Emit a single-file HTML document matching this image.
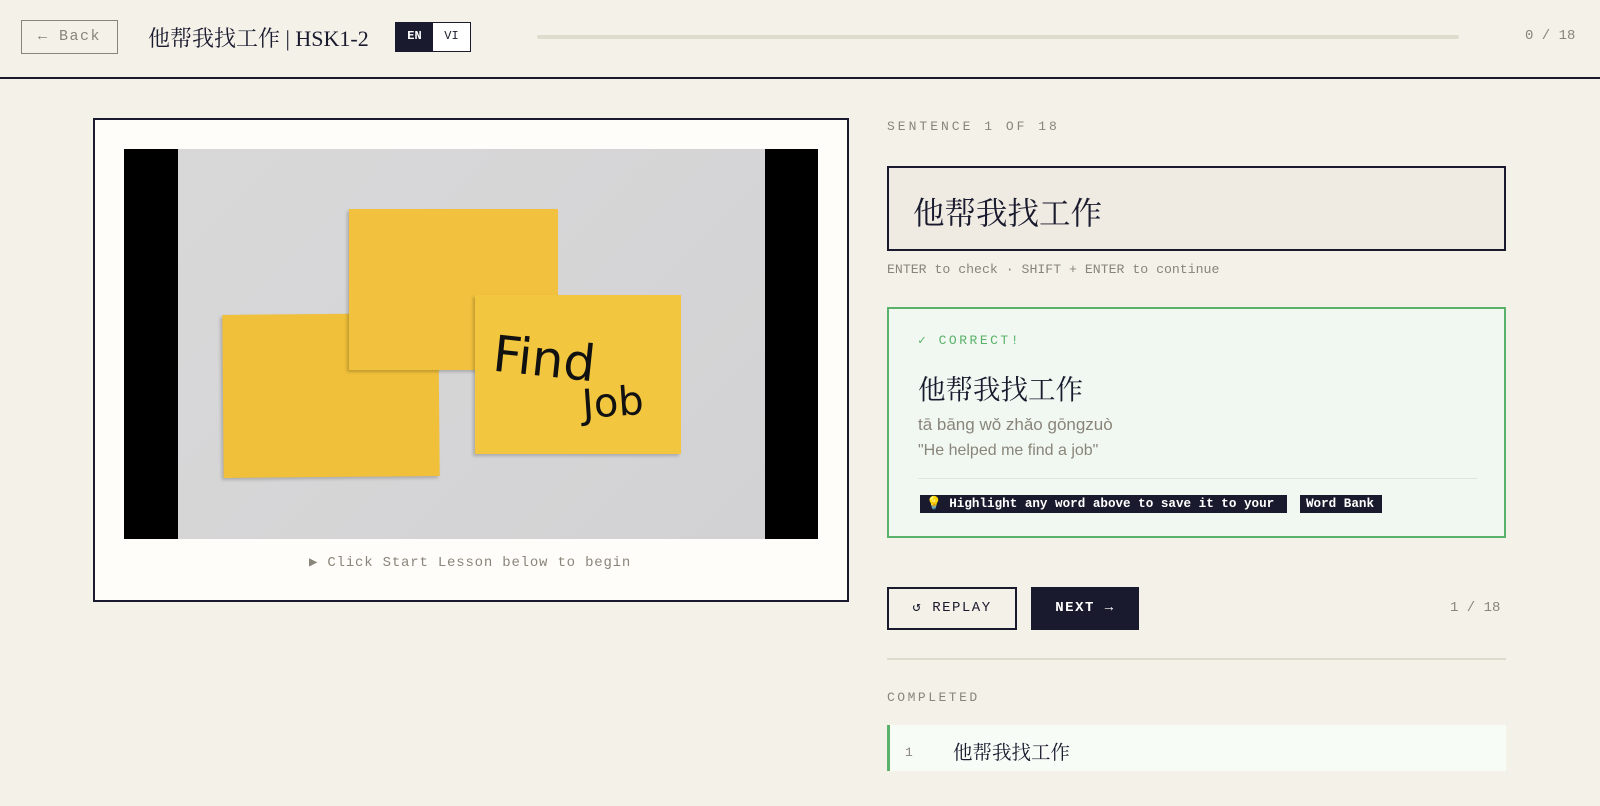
<!DOCTYPE html>
<html><head><meta charset="utf-8"><style>
*{box-sizing:border-box;margin:0;padding:0}
body{width:1600px;height:806px;background:#f4f1e9;font-family:"Liberation Sans","Noto Sans CJK SC",sans-serif;color:#1a1a2e;position:relative;overflow:hidden}
.mono{font-family:"Liberation Mono","DejaVu Sans Mono",monospace}
.serif{font-family:"Liberation Serif","Noto Serif CJK SC",serif}
.a{position:absolute}
</style></head><body>
<div class="a mono" style="left:21px;top:20px;width:97px;height:34px;border:1.5px solid #8a857a;color:#8a857a;font-size:15px;letter-spacing:1.5px;line-height:31px;text-align:center">← Back</div>
<div class="a serif" style="left:148px;top:22px;font-size:22px;color:#1a1a2e">他帮我找工作 | HSK1-2</div>
<div class="a mono" style="left:395px;top:22px;width:76px;height:30px;border:1.5px solid #1a1a2e;display:flex;font-size:12px;font-weight:bold">
<div style="width:37px;background:#1a1a2e;color:#fff;text-align:center;line-height:27px">EN</div>
<div style="flex:1;text-align:center;line-height:27px;background:#fff;font-weight:normal">VI</div></div>
<div class="a" style="left:537px;top:35px;width:922px;height:4px;background:#e0dccd;border-radius:2px"></div>
<div class="a mono" style="left:1525px;top:28px;font-size:14px;color:#8a857a">0 / 18</div>
<div class="a" style="left:0;top:77px;width:1600px;height:2px;background:#1a1a2e"></div>

<div class="a" style="left:93px;top:118px;width:756px;height:484px;border:2px solid #1a1a2e;background:#fefdf9"></div>
<div class="a" style="left:124px;top:149px;width:694px;height:390px;background:#000"></div>
<div class="a" style="left:178px;top:149px;width:587px;height:390px;background:linear-gradient(135deg,#d9d8d9,#d2d2d4)"></div>
<div class="a" style="left:223px;top:314px;width:216px;height:163px;background:#f0c03a;box-shadow:-2px 2px 3px rgba(0,0,0,.2);transform:rotate(-.5deg)"></div>
<div class="a" style="left:349px;top:209px;width:209px;height:161px;background:#f2c23e;box-shadow:-2px 2px 3px rgba(0,0,0,.2)"></div>
<div class="a" style="left:475px;top:295px;width:206px;height:159px;background:#f3c640;box-shadow:-2px 2px 3px rgba(0,0,0,.2)"></div>
<div class="a" style="left:493px;top:330px;font-family:'DejaVu Sans',cursive;font-size:50px;color:#111;transform:rotate(6deg)">Find</div>
<div class="a" style="left:582px;top:380px;font-family:'DejaVu Sans',cursive;font-size:40px;color:#111;transform:rotate(-4deg)">Job</div>
<div class="a mono" style="left:309px;top:554px;font-size:14px;color:#8a857a;letter-spacing:0.8px">▶ Click Start Lesson below to begin</div>

<div class="a mono" style="left:887px;top:119px;font-size:13px;color:#8a857a;letter-spacing:3px">SENTENCE 1 OF 18</div>
<div class="a" style="left:887px;top:166px;width:619px;height:85px;border:2px solid #1a1a2e;background:#efebe2"></div>
<div class="a serif" style="left:913px;top:189px;font-size:31.5px;color:#1a1a2e">他帮我找工作</div>
<div class="a mono" style="left:887px;top:262px;font-size:13.2px;color:#8a857a">ENTER to check · SHIFT + ENTER to continue</div>

<div class="a" style="left:887px;top:307px;width:619px;height:231px;border:2px solid #5ab26a;background:#f0f8f1"></div>
<div class="a mono" style="left:918px;top:333px;font-size:13px;color:#5ab26a;letter-spacing:2.5px">✓ CORRECT!</div>
<div class="a serif" style="left:918px;top:367px;font-size:27.5px;color:#1a1a2e">他帮我找工作</div>
<div class="a" style="left:918px;top:415px;font-size:17px;color:#8a857a">tā bāng wǒ zhǎo gōngzuò</div>
<div class="a" style="left:918px;top:442px;font-size:16px;color:#8a857a">"He helped me find a job"</div>
<div class="a" style="left:918px;top:478px;width:559px;height:1px;background:#dfe6dd"></div>
<div class="a mono" style="left:920px;top:495px;height:18px;width:367px;padding:0 6px;background:#1a1a2e;color:#fff;font-size:12.6px;font-weight:bold;line-height:18px;white-space:nowrap;overflow:hidden">💡 Highlight any word above to save it to your</div>
<div class="a mono" style="left:1300px;top:495px;height:18px;width:82px;padding:0 6px;background:#1a1a2e;color:#fff;font-size:12.6px;font-weight:bold;line-height:18px">Word Bank</div>

<div class="a mono" style="left:887px;top:587px;width:130px;height:43px;border:2px solid #1a1a2e;font-size:14px;letter-spacing:1.5px;text-align:center;line-height:39px">↺ REPLAY</div>
<div class="a mono" style="left:1031px;top:587px;width:108px;height:43px;background:#1a1a2e;color:#fff;font-size:14px;font-weight:bold;letter-spacing:1.5px;text-align:center;line-height:43px">NEXT →</div>
<div class="a mono" style="left:1450px;top:600px;font-size:14px;color:#8a857a">1 / 18</div>
<div class="a" style="left:887px;top:658px;width:619px;height:2px;background:#e0dccd"></div>
<div class="a mono" style="left:887px;top:690px;font-size:13px;color:#8a857a;letter-spacing:2.5px">COMPLETED</div>
<div class="a" style="left:887px;top:725px;width:619px;height:46px;background:#f7fcf7;border-left:3px solid #5ab26a"></div>
<div class="a mono" style="left:905px;top:745px;font-size:13px;color:#8a857a">1</div>
<div class="a serif" style="left:953px;top:737px;font-size:19.5px;color:#1a1a2e">他帮我找工作</div>
</body></html>
